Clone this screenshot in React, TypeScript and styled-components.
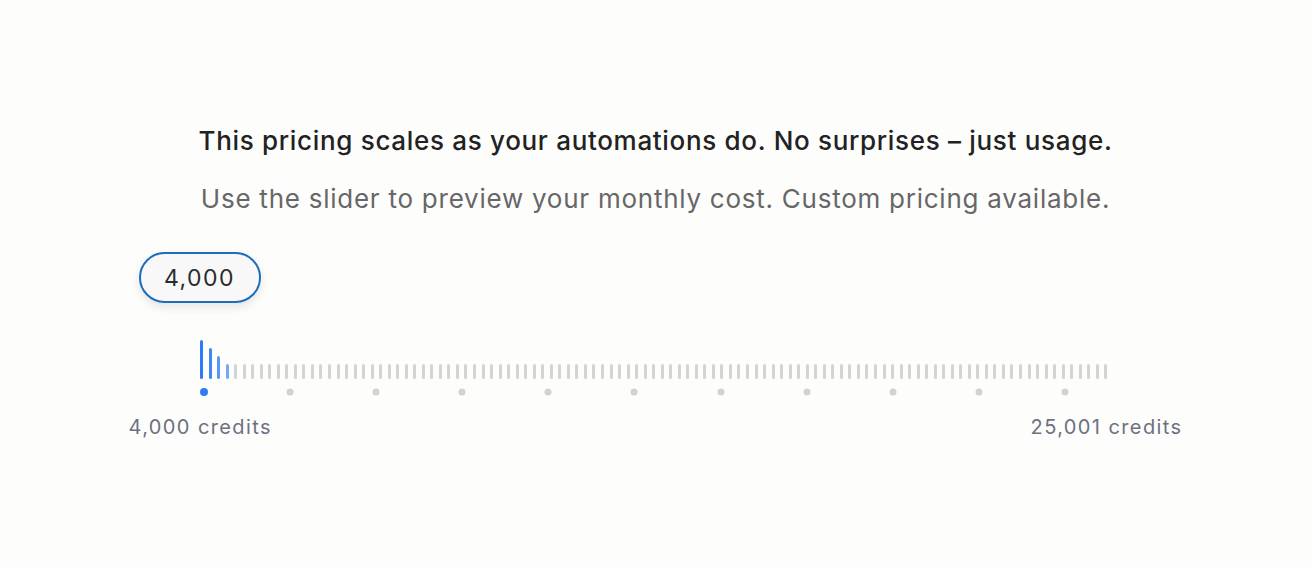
import React from "react";
import styled, { createGlobalStyle } from "styled-components";

const GlobalStyle = createGlobalStyle`
  html, body { margin: 0; padding: 0; background: #fdfdfc; }
  body { font-family: Inter, "Noto Sans", sans-serif; }
`;

const MIN = 4000;
const MAX = 25001;
const VALUE = 4000;
const BAR_COUNT = 107;
const TRACK_WIDTH = 908;
const DOT_OFFSET = 3.5;
const DOT_SPAN = 905;

const Page = styled.main`
  min-height: 567px;
  box-sizing: border-box;
  padding-top: 123px;
  display: flex;
  flex-direction: column;
  align-items: center;
`;

const Headline = styled.p`
  margin: 0;
  font-size: 26px;
  font-weight: 450;
  line-height: 36px;
  color: #222222;
  letter-spacing: 0.68px;
  text-align: center;
`;

const Sub = styled.p`
  margin: 22px 0 0;
  font-size: 26px;
  line-height: 36px;
  color: #676767;
  letter-spacing: 0.75px;
  text-align: center;
`;

const SliderArea = styled.section`
  margin-top: 35px;
  width: 1054px;
  display: flex;
  flex-direction: column;
  align-items: center;
`;

const Track = styled.div`
  width: ${TRACK_WIDTH}px;
  margin-right: 3px;
  display: flex;
  flex-direction: column;
`;

const PillRow = styled.div`
  position: relative;
  height: 50px;
`;

const Pill = styled.div`
  position: absolute;
  top: 0;
  transform: translateX(-50%);
  box-sizing: border-box;
  width: 122px;
  height: 51px;
  border: 2px solid #1c6bbd;
  border-radius: 26px;
  background: #f8f8f8;
  box-shadow: 0 4px 10px rgba(0, 0, 0, 0.1);
  display: flex;
  align-items: center;
  justify-content: center;
  font-size: 23px;
  letter-spacing: 1.5px;
  color: #2b2b2b;
`;

const Bars = styled.div`
  margin-top: 38px;
  height: 39px;
  display: flex;
  justify-content: space-between;
  align-items: flex-end;
`;

const Bar = styled.span<{ $h: number; $c: string }>`
  width: 3px;
  height: ${(p) => p.$h}px;
  border-radius: 2px;
  background: ${(p) => p.$c};
`;

const DotRow = styled.div`
  position: relative;
  margin-top: 9px;
  height: 7px;
`;

const Dot = styled.span<{ $active: boolean }>`
  position: absolute;
  top: 50%;
  width: ${(p) => (p.$active ? 8 : 7)}px;
  height: ${(p) => (p.$active ? 8 : 7)}px;
  border-radius: 50%;
  transform: translate(-50%, -50%);
  background: ${(p) => (p.$active ? "#2f7cf6" : "#d2d3d1")};
`;

const Labels = styled.div`
  margin-top: 20px;
  width: 100%;
  display: flex;
  justify-content: space-between;
  font-size: 20px;
  line-height: 24px;
  letter-spacing: 1.4px;
  color: #6c7180;
`;

const activeBars = [
  { h: 39, c: "#2f7bf5" },
  { h: 31, c: "#3f87f6" },
  { h: 23, c: "#5a97f7" },
  { h: 15, c: "#76a8f8" },
];

const fmt = (n: number) => n.toLocaleString("en-US");

export default function App() {
  const pos = (v: number) => DOT_OFFSET + ((v - MIN) / (MAX - MIN)) * DOT_SPAN;
  const dots: number[] = [];
  for (let v = MIN; v < MAX; v += 2000) dots.push(v);

  return (
    <>
      <GlobalStyle />
      <Page>
        <Headline>This pricing scales as your automations do. No surprises – just usage.</Headline>
        <Sub>Use the slider to preview your monthly cost. Custom pricing available.</Sub>
        <SliderArea>
          <Track>
            <PillRow>
              <Pill style={{ left: pos(VALUE) - 4 }}>{fmt(VALUE)}</Pill>
            </PillRow>
            <Bars>
              {Array.from({ length: BAR_COUNT }, (_, i) => {
                const a = activeBars[i];
                return <Bar key={i} $h={a ? a.h : 15} $c={a ? a.c : "#d3d5d3"} />;
              })}
            </Bars>
            <DotRow>
              {dots.map((v) => (
                <Dot key={v} $active={v === VALUE} style={{ left: pos(v) }} />
              ))}
            </DotRow>
          </Track>
          <Labels>
            <span>{fmt(MIN)} credits</span>
            <span>{fmt(MAX)} credits</span>
          </Labels>
        </SliderArea>
      </Page>
    </>
  );
}
